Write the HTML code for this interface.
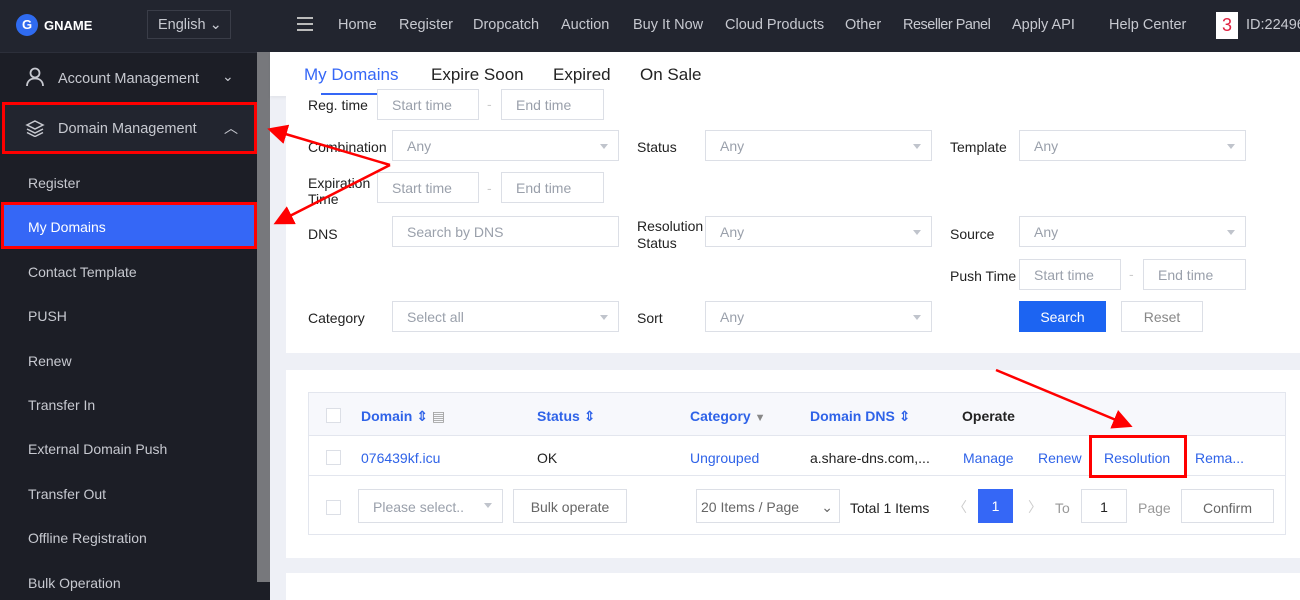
<!DOCTYPE html><html><head><style>
*{margin:0;padding:0;box-sizing:border-box}
body{width:1300px;height:600px;overflow:hidden;position:relative;background:#eef0f6;font-family:"Liberation Sans","DejaVu Sans",sans-serif;font-size:14px;color:#222}
.a{position:absolute;white-space:nowrap}
.top{left:0;top:0;width:1300px;height:52px;background:#22252f}
.side{left:0;top:52px;width:270px;height:548px;background:#1c1e26}
.scroll{left:257px;top:52px;width:13px;height:530px;background:#77787c}
.nav{color:#c7c9d0;font-size:14.5px;top:17px}
.sm{color:#c7c9d0;font-size:14px;left:28px}
.panel{background:#fff}
.lbl{font-size:14px;color:#222}
.inp{border:1px solid #dcdfe6;background:#fff;height:31px;color:#9aa0ab;font-size:14px;padding:7px 14px}
.sel:after{content:"";position:absolute;right:10px;top:13px;border:4px solid transparent;border-top:5px solid #c0c4cc}
.blue{color:#2f63e8}
.th{font-weight:bold;color:#2f63e8;font-size:14px}
.cb{width:15px;height:15px;border:1px solid #dcdfe6;background:#fff}
.red{border:3px solid #f00}
</style></head><body>
<div class="a top"></div>
<div class="a" style="left:16px;top:14px;width:22px;height:22px;border-radius:50%;background:#2f6bf0;color:#fff;font-weight:bold;font-size:13px;text-align:center;line-height:22px">G</div>
<div class="a" style="left:44px;top:18px;color:#fff;font-weight:bold;font-size:13px">GNAME</div>
<div class="a" style="left:147px;top:10px;width:84px;height:29px;border:1px solid #3a3d48;color:#c7c9d0;font-size:14.5px;padding:6px 10px">English ⌄</div>
<div class="a" style="left:297px;top:17px;width:16px;height:2px;background:#bbb;box-shadow:0 6px 0 #bbb,0 12px 0 #bbb"></div>
<div class="a nav" style="left:338px">Home</div>
<div class="a nav" style="left:399px">Register</div>
<div class="a nav" style="left:473px">Dropcatch</div>
<div class="a nav" style="left:561px">Auction</div>
<div class="a nav" style="left:633px">Buy It Now</div>
<div class="a nav" style="left:725px">Cloud Products</div>
<div class="a nav" style="left:845px">Other</div>
<div class="a nav" style="left:903px;letter-spacing:-0.5px">Reseller Panel</div>
<div class="a nav" style="left:1012px">Apply API</div>
<div class="a nav" style="left:1109px">Help Center</div>
<div class="a" style="left:1216px;top:12px;width:22px;height:27px;background:#fff;color:#e02040;font-size:18px;text-align:center;line-height:27px">3</div>
<div class="a nav" style="left:1246px">ID:22496</div>

<div class="a side"></div><div class="a scroll"></div>
<div class="a" style="left:0;top:52px;width:257px;height:1px;background:#2c2f3a"></div>
<svg class="a" style="left:25px;top:67px" width="20" height="20" fill="none" stroke="#c7c9d0" stroke-width="1.8"><circle cx="10" cy="6" r="4.5"/><path d="M2 19c0-5 3.5-7.5 8-7.5s8 2.5 8 7.5"/></svg>
<div class="a sm" style="left:58px;top:71px;font-size:14.5px">Account Management</div>
<div class="a" style="left:222px;top:68px;color:#c7c9d0">⌄</div>
<div class="a red" style="left:2px;top:102px;width:255px;height:52px;background:#22252f"></div>
<svg class="a" style="left:25px;top:119px" width="20" height="18" fill="none" stroke="#c7c9d0" stroke-width="1.5"><path d="M10 2l8 4-8 4-8-4z M2 10l8 4 8-4 M2 13.5l8 4 8-4"/></svg>
<div class="a sm" style="left:58px;top:121px;font-size:14.5px">Domain Management</div>
<div class="a" style="left:224px;top:118px;color:#c7c9d0">︿</div>
<div class="a sm" style="top:175px">Register</div>
<div class="a red" style="left:1px;top:202px;width:256px;height:47px;background:#3567f6"></div>
<div class="a" style="left:28px;top:219px;color:#fff;font-size:14px">My Domains</div>
<div class="a sm" style="top:264px">Contact Template</div>
<div class="a sm" style="top:308px">PUSH</div>
<div class="a sm" style="top:353px">Renew</div>
<div class="a sm" style="top:397px">Transfer In</div>
<div class="a sm" style="top:441px">External Domain Push</div>
<div class="a sm" style="top:486px">Transfer Out</div>
<div class="a sm" style="top:530px">Offline Registration</div>
<div class="a sm" style="top:575px">Bulk Operation</div>

<div class="a panel" style="left:270px;top:52px;width:1030px;height:44px;box-shadow:0 2px 3px rgba(0,0,0,.05)"></div>
<div class="a" style="left:304px;top:65px;font-size:17px;color:#3567f6">My Domains</div>
<div class="a" style="left:321px;top:93px;width:63px;height:2px;background:#3567f6"></div>
<div class="a" style="left:431px;top:65px;font-size:17px">Expire Soon</div>
<div class="a" style="left:553px;top:65px;font-size:17px">Expired</div>
<div class="a" style="left:640px;top:65px;font-size:17px">On Sale</div>

<div class="a panel" style="left:286px;top:96px;width:1014px;height:257px"></div>
<div class="a lbl" style="left:308px;top:97px">Reg. time</div>
<div class="a inp" style="left:377px;top:89px;width:102px">Start time</div>
<div class="a" style="left:487px;top:96px;color:#ccc">-</div>
<div class="a inp" style="left:501px;top:89px;width:103px">End time</div>

<div class="a lbl" style="left:308px;top:139px">Combination</div>
<div class="a inp sel" style="left:392px;top:130px;width:227px">Any</div>
<div class="a lbl" style="left:637px;top:139px">Status</div>
<div class="a inp sel" style="left:705px;top:130px;width:227px">Any</div>
<div class="a lbl" style="left:950px;top:139px">Template</div>
<div class="a inp sel" style="left:1019px;top:130px;width:227px">Any</div>

<div class="a lbl" style="left:308px;top:175px;line-height:16px">Expiration<br>Time</div>
<div class="a inp" style="left:377px;top:172px;width:102px">Start time</div>
<div class="a" style="left:487px;top:180px;color:#ccc">-</div>
<div class="a inp" style="left:501px;top:172px;width:103px">End time</div>

<div class="a lbl" style="left:308px;top:226px">DNS</div>
<div class="a inp" style="left:392px;top:216px;width:227px">Search by DNS</div>
<div class="a lbl" style="left:637px;top:218px;line-height:17px">Resolution<br>Status</div>
<div class="a inp sel" style="left:705px;top:216px;width:227px">Any</div>
<div class="a lbl" style="left:950px;top:226px">Source</div>
<div class="a inp sel" style="left:1019px;top:216px;width:227px">Any</div>

<div class="a lbl" style="left:950px;top:268px">Push Time</div>
<div class="a inp" style="left:1019px;top:259px;width:102px">Start time</div>
<div class="a" style="left:1129px;top:266px;color:#ccc">-</div>
<div class="a inp" style="left:1143px;top:259px;width:103px">End time</div>

<div class="a lbl" style="left:308px;top:310px">Category</div>
<div class="a inp sel" style="left:392px;top:301px;width:227px">Select all</div>
<div class="a lbl" style="left:637px;top:310px">Sort</div>
<div class="a inp sel" style="left:705px;top:301px;width:227px">Any</div>
<div class="a" style="left:1019px;top:301px;width:87px;height:31px;background:#1c64f2;color:#fff;text-align:center;line-height:32px">Search</div>
<div class="a inp" style="left:1121px;top:301px;width:82px;text-align:center;padding:7px 0;color:#888">Reset</div>

<div class="a panel" style="left:286px;top:370px;width:1014px;height:188px"></div>
<div class="a" style="left:308px;top:392px;width:978px;height:143px;border:1px solid #e3e6ee"></div>
<div class="a" style="left:309px;top:393px;width:976px;height:43px;background:#f7f8fc;border-bottom:1px solid #e3e6ee"></div>
<div class="a" style="left:309px;top:475px;width:976px;height:1px;background:#e3e6ee"></div>
<div class="a cb" style="left:326px;top:408px"></div>
<div class="a th" style="left:361px;top:408px">Domain ⇕ <span style="color:#999;font-weight:normal">▤</span></div>
<div class="a th" style="left:537px;top:408px">Status ⇕</div>
<div class="a th" style="left:690px;top:408px">Category <span style="color:#888;font-size:11px">▼</span></div>
<div class="a th" style="left:810px;top:408px">Domain DNS ⇕</div>
<div class="a" style="left:962px;top:408px;font-weight:bold">Operate</div>
<div class="a cb" style="left:326px;top:450px"></div>
<div class="a blue" style="left:361px;top:450px">076439kf.icu</div>
<div class="a" style="left:537px;top:450px">OK</div>
<div class="a blue" style="left:690px;top:450px">Ungrouped</div>
<div class="a" style="left:810px;top:450px">a.share-dns.com,...</div>
<div class="a blue" style="left:963px;top:450px">Manage</div>
<div class="a blue" style="left:1038px;top:450px">Renew</div>
<div class="a red" style="left:1089px;top:435px;width:98px;height:43px"></div>
<div class="a blue" style="left:1104px;top:450px">Resolution</div>
<div class="a blue" style="left:1195px;top:450px">Rema...</div>
<div class="a cb" style="left:326px;top:500px"></div>
<div class="a inp sel" style="left:358px;top:489px;width:145px;height:34px;padding-top:9px">Please select..</div>
<div class="a inp" style="left:513px;top:489px;width:114px;height:34px;padding-top:9px;color:#666;text-align:center;padding-left:0;padding-right:0">Bulk operate</div>
<div class="a inp" style="left:696px;top:489px;width:144px;height:34px;padding:9px 4px;color:#666">20 Items / Page <span style="position:absolute;right:6px">⌄</span></div>
<div class="a" style="left:850px;top:500px">Total 1 Items</div>
<div class="a" style="left:953px;top:497px;color:#ccc">〈</div>
<div class="a" style="left:978px;top:489px;width:35px;height:34px;background:#3567f6;color:#fff;text-align:center;line-height:35px">1</div>
<div class="a" style="left:1028px;top:497px;color:#ccc">〉</div>
<div class="a" style="left:1055px;top:500px;color:#999">To</div>
<div class="a inp" style="left:1081px;top:489px;width:46px;height:34px;padding-top:9px;color:#222;text-align:center;padding-left:0;padding-right:0">1</div>
<div class="a" style="left:1138px;top:500px;color:#999">Page</div>
<div class="a inp" style="left:1181px;top:489px;width:93px;height:34px;padding-top:10px;color:#666;text-align:center;padding-left:0;padding-right:0">Confirm</div>

<div class="a panel" style="left:286px;top:573px;width:1014px;height:27px"></div>

<svg class="a" style="left:0;top:0" width="1300" height="600">
<defs><marker id="m" markerWidth="8" markerHeight="8" refX="6" refY="4" orient="auto"><path d="M0 0L8 4L0 8z" fill="#f00"/></marker></defs>
<g stroke="#f00" stroke-width="2.5" fill="none" marker-end="url(#m)">
<line x1="390" y1="165" x2="272" y2="130"/>
<line x1="390" y1="165" x2="278" y2="222"/>
<line x1="996" y1="370" x2="1128" y2="425"/>
</g></svg>
</body></html>
